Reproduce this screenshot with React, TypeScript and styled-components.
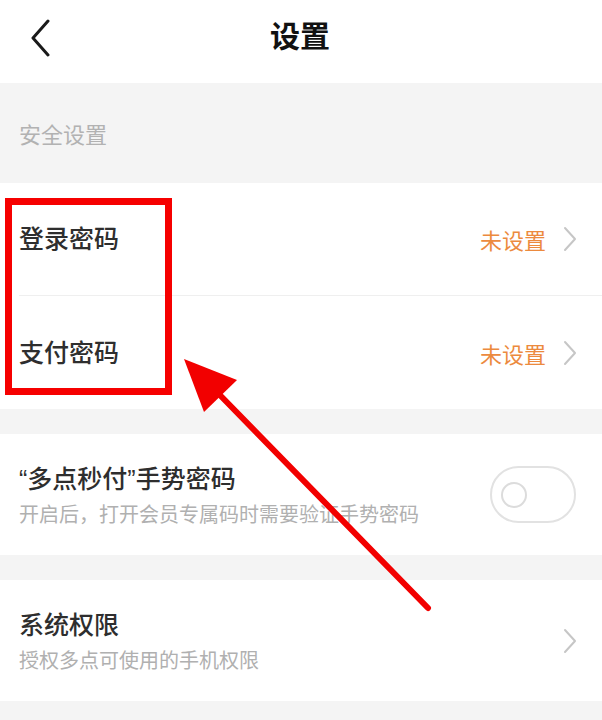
import styled, { createGlobalStyle } from 'styled-components';

const GlobalStyle = createGlobalStyle`
	html, body {
		margin: 0;
		padding: 0;
		background: #f4f4f4;
	}
	* {
		box-sizing: border-box;
	}
	body {
		font-family: "Liberation Sans", "Noto Sans CJK SC", sans-serif;
	}
`;

function Chevron({ left }: { left?: boolean }) {
	return left ? (
		<svg width="20" height="38" viewBox="0 0 20 38">
			<path d="M18 2 L3 19 L18 36" fill="none" stroke="#1a1a1a" strokeWidth="3" strokeLinecap="round" strokeLinejoin="round" />
		</svg>
	) : (
		<svg width="16" height="26" viewBox="0 0 16 26">
			<path d="M3 2 L13 13 L3 24" fill="none" stroke="#c6c6c6" strokeWidth="2" strokeLinecap="round" strokeLinejoin="round" />
		</svg>
	);
}

export default function App() {
	return (
		<>
			<GlobalStyle />
			<Page>
				<Header>
					<BackButton>
						<Chevron left />
					</BackButton>
					<Title>设置</Title>
					<span />
				</Header>

				<SectionLabel>安全设置</SectionLabel>

				<Group>
					<Row $divider>
						<RowTitle>登录密码</RowTitle>
						<RowRight>
							<Status>未设置</Status>
							<Chevron />
						</RowRight>
					</Row>
					<Row>
						<RowTitle>支付密码</RowTitle>
						<RowRight>
							<Status>未设置</Status>
							<Chevron />
						</RowRight>
					</Row>
				</Group>

				<Group $gap>
					<TallRow>
						<TextBlock>
							<RowTitle>“多点秒付”手势密码</RowTitle>
							<SubText>开启后，打开会员专属码时需要验证手势密码</SubText>
						</TextBlock>
						<Toggle>
							<Knob />
						</Toggle>
					</TallRow>
				</Group>

				<Group $gap>
					<TallRow>
						<TextBlock>
							<RowTitle>系统权限</RowTitle>
							<SubText>授权多点可使用的手机权限</SubText>
						</TextBlock>
						<RowRight>
							<Chevron />
						</RowRight>
					</TallRow>
				</Group>

				<Footer />

				<Highlight />
				<Arrow width="602" height="720" viewBox="0 0 602 720">
					<line x1="428" y1="608" x2="214" y2="389" stroke="#f20000" strokeWidth="6" strokeLinecap="round" />
					<polygon points="184,359 237,380 204,412" fill="#f20000" />
				</Arrow>
			</Page>
		</>
	);
}

const Page = styled.div`
	position: relative;
	width: 602px;
	height: 720px;
	overflow: hidden;
	background: #f4f4f4;
`;

const Header = styled.header`
	height: 83px;
	background: #ffffff;
	display: grid;
	grid-template-columns: 120px 1fr 120px;
	align-items: center;
`;

const BackButton = styled.div`
	display: flex;
	align-items: center;
	padding-left: 30px;
	padding-bottom: 8px;
`;

const Title = styled.h1`
	margin: 0;
	text-align: center;
	font-size: 30px;
	font-weight: 700;
	color: #111111;
	padding-bottom: 16px;
	padding-right: 2px;
`;

const SectionLabel = styled.div`
	height: 100px;
	display: flex;
	align-items: center;
	padding-left: 19px;
	font-size: 22px;
	color: #b2b2b2;
`;

const Group = styled.section<{ $gap?: boolean }>`
	background: #ffffff;
	margin-top: ${(p) => (p.$gap ? '25px' : '0')};
`;

const Row = styled.div<{ $divider?: boolean }>`
	height: 113px;
	margin-left: 19px;
	padding-right: 24px;
	display: flex;
	align-items: center;
	justify-content: space-between;
	border-bottom: ${(p) => (p.$divider ? '1px solid #efefef' : 'none')};
`;

const TallRow = styled.div`
	height: 121px;
	padding-left: 19px;
	padding-right: 24px;
	display: flex;
	align-items: center;
	justify-content: space-between;
`;

const TextBlock = styled.div`
	display: flex;
	flex-direction: column;
	gap: 6px;
	padding-top: 2px;
`;

const RowTitle = styled.div`
	font-size: 25px;
	line-height: 32px;
	font-weight: 500;
	color: #2e2e2e;
`;

const SubText = styled.div`
	font-size: 20px;
	line-height: 28px;
	color: #b0b0b0;
`;

const RowRight = styled.div`
	display: flex;
	align-items: center;
	gap: 16px;
`;

const Status = styled.span`
	font-size: 22px;
	color: #ec8a3e;
`;

const Toggle = styled.div`
	width: 86px;
	height: 57px;
	margin-right: 2px;
	border: 2px solid #e2e2e2;
	border-radius: 29px;
	display: flex;
	align-items: center;
	padding-left: 9px;
`;

const Knob = styled.div`
	width: 26px;
	height: 26px;
	border: 2px solid #dcdcdc;
	border-radius: 50%;
`;

const Footer = styled.div`
	height: 18px;
	margin-top: 25px;
`;

const Highlight = styled.div`
	position: absolute;
	left: 5px;
	top: 198px;
	width: 167px;
	height: 197px;
	border: 7px solid #f60000;
	pointer-events: none;
`;

const Arrow = styled.svg`
	position: absolute;
	left: 0;
	top: 0;
	pointer-events: none;
`;
